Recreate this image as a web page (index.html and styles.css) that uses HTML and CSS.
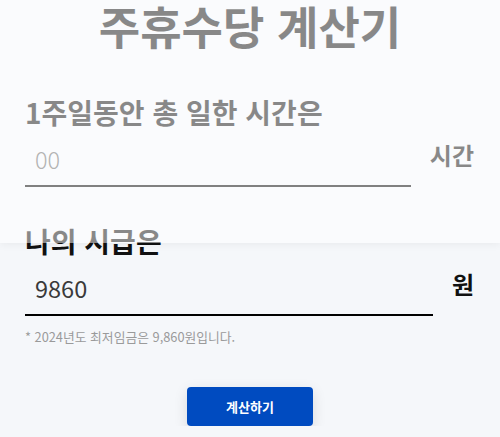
FILE: index.html
```html
<!DOCTYPE html>
<html lang="ko">
<head>
    <meta charset="UTF-8">
    <title>주휴수당 계산기</title>
    <meta name="viewport" content="width=device-width, initial-scale=1">
    <link rel="stylesheet" href="styles.css">
</head>
<body>

    <div class="calc">
        <h1 class="title">주휴수당 계산기</h1>

        <div class="field field-hours">
            <label class="field-label" for="hours">1주일동안 총 일한 시간은</label>
            <div class="field-row">
                <input type="text" id="hours" class="field-input" placeholder="00">
                <span class="field-unit">시간</span>
            </div>
        </div>

        <div class="field field-wage">
            <label class="field-label" for="wage">나의 시급은</label>
            <div class="field-row">
                <input type="text" id="wage" class="field-input" value="9860">
                <span class="field-unit">원</span>
            </div>
            <p class="field-note">* 2024년도 최저임금은 9,860원입니다.</p>
        </div>

        <div class="actions">
            <button class="calc-btn">계산하기</button>
        </div>
    </div>

    <!-- translucent header layer that fades the upper half -->
    <div class="fade-layer"></div>

</body>
</html>
```

FILE: styles.css
```css
body {
    font-family: 'Noto Sans CJK KR', 'Noto Sans', sans-serif;
    background: #f5f7fa;
    color: #111;
    margin: 0;
    padding: 0;
}

.calc {
    padding: 0 25px;
}

.title {
    margin: 0;
    font-size: 45px;
    line-height: 51px;
    font-weight: bold;
    text-align: center;
    color: #111;
}

.field-hours {
    margin-top: 44px;
}

.field-wage {
    margin-top: 37px;
}

.field-label {
    display: block;
    font-size: 28px;
    line-height: 34px;
    font-weight: bold;
    color: #111;
}

.field-row {
    display: flex;
    align-items: flex-start;
    gap: 19px;
    margin-top: 11px;
}

.field-input {
    flex: 1;
    min-width: 0;
    font-family: inherit;
    font-size: 23.5px;
    line-height: 30px;
    color: #3a3a3a;
    background: transparent;
    border: none;
    border-bottom: 2px solid #000;
    border-radius: 0;
    padding: 4px 10px 11px;
    outline: none;
}

.field-input::placeholder {
    color: #666;
    font-weight: 300;
}

.field-unit {
    font-size: 24px;
    line-height: 30px;
    font-weight: bold;
    padding-right: 1px;
}

.field-note {
    margin: 12px 0 0;
    font-size: 12.8px;
    line-height: 18px;
    color: #9a9a9a;
}

.actions {
    display: flex;
    justify-content: center;
    margin-top: 41px;
}

.calc-btn {
    width: 126px;
    height: 39px;
    background-color: #004bc0;
    color: white;
    border: none;
    border-radius: 4px;
    font-family: inherit;
    font-size: 13px;
    font-weight: bold;
    box-shadow: 0 4px 14px rgba(0, 0, 0, 0.12);
    cursor: pointer;
}

.fade-layer {
    position: absolute;
    top: 0;
    left: 0;
    right: 0;
    height: 243px;
    background: rgba(255, 255, 255, 0.5);
    box-shadow: 0 2px 8px rgba(0, 0, 0, 0.05);
    pointer-events: none;
}
```
